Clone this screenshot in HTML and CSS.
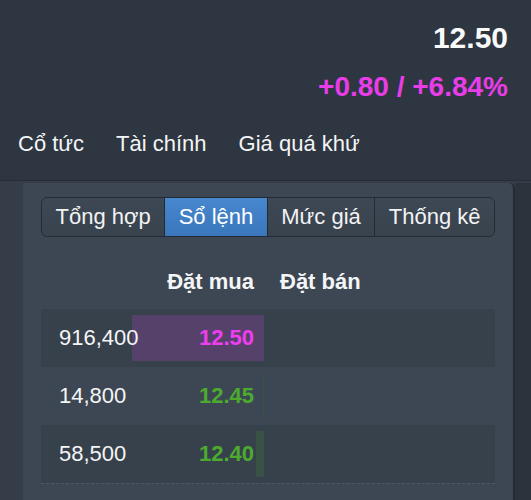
FILE: index.html
```html
<!DOCTYPE html>
<html lang="vi">
<head>
<meta charset="utf-8">
<title>Sổ lệnh</title>
<link rel="stylesheet" href="styles.css">
</head>
<body>
<header class="header">
  <div class="quote">
    <div class="price">12.50</div>
    <div class="change">+0.80 / +6.84%</div>
  </div>
  <nav class="nav">
    <span class="nav-item">Cổ tức</span>
    <span class="nav-item">Tài chính</span>
    <span class="nav-item">Giá quá khứ</span>
  </nav>
</header>
<main class="content">
  <section class="panel">
    <div class="segmented">
      <span class="seg">Tổng hợp</span>
      <span class="seg seg-active">Sổ lệnh</span>
      <span class="seg">Mức giá</span>
      <span class="seg">Thống kê</span>
    </div>
    <div class="book-head">
      <span class="head-buy">Đặt mua</span>
      <span class="head-sell">Đặt bán</span>
    </div>
    <div class="book">
      <div class="row row-odd">
        <div class="buy">
          <span class="bar bar-up" style="width:132px"></span>
          <span class="qty">916,400</span>
          <span class="px px-ref">12.50</span>
        </div>
        <div class="sell"></div>
      </div>
      <div class="row">
        <div class="buy">
          <span class="bar bar-green" style="width:1px"></span>
          <span class="qty">14,800</span>
          <span class="px px-green">12.45</span>
        </div>
        <div class="sell"></div>
      </div>
      <div class="row row-odd">
        <div class="buy">
          <span class="bar bar-green" style="width:8px"></span>
          <span class="qty">58,500</span>
          <span class="px px-green">12.40</span>
        </div>
        <div class="sell"></div>
      </div>
    </div>
  </section>
  <div class="gutter"></div>
</main>
</body>
</html>
```
FILE: styles.css
```css
* { box-sizing: border-box; }
html, body { margin: 0; padding: 0; }
body {
  width: 531px;
  height: 500px;
  overflow: hidden;
  background: #2e3641;
  font-family: "Liberation Sans", Arial, sans-serif;
  color: #f4f5f6;
}
.header {
  height: 181px;
  border-bottom: 1px solid #262d36;
  padding: 20px 23px 0 18px;
}
.quote { text-align: right; }
.price {
  font-size: 30px;
  line-height: 36px;
  font-weight: bold;
  color: #fafafa;
}
.change {
  margin-top: 13px;
  font-size: 28px;
  line-height: 36px;
  font-weight: bold;
  color: #e83de8;
}
.nav {
  margin-top: 24px;
  display: flex;
  gap: 32px;
  font-size: 22px;
  line-height: 30px;
}
.content {
  display: flex;
  height: 319px;
  background: #343d48;
  padding: 2px 0 0 23px;
}
.panel {
  flex: 1 1 0;
  min-width: 0;
  background: #3d4753;
  border-top-right-radius: 6px;
  border-right: 2px solid #242b33;
  padding: 14px 18px 0 18px;
}
.gutter {
  flex: 0 0 16px;
  background: #2b333c;
}
.segmented {
  display: flex;
  height: 40px;
  border: 1px solid #232a32;
  border-radius: 6px;
  overflow: hidden;
  background: linear-gradient(#3e4854, #39434e);
}
.seg {
  flex: 1 1 auto;
  min-width: 0;
  padding: 0 13px;
  font-size: 22px;
  line-height: 38px;
  text-align: center;
  white-space: nowrap;
  color: #f2f3f4;
}
.seg + .seg { border-left: 1px solid #232a32; }
.seg-active {
  background: linear-gradient(#4787cd, #3a77bd);
  color: #ffffff;
}
.book-head {
  display: grid;
  grid-template-columns: 223px 1fr;
  margin-top: 30px;
  font-size: 22px;
  line-height: 30px;
  font-weight: bold;
}
.head-buy { text-align: right; padding-right: 10px; }
.head-sell { padding-left: 16px; }
.book {
  margin-top: 12px;
  border-bottom: 1px dashed #4d5864;
}
.row {
  display: grid;
  grid-template-columns: 223px 1fr;
  height: 58px;
  font-size: 22px;
  line-height: 58px;
}
.row-odd { background: #37414c; }
.buy {
  position: relative;
  display: flex;
  justify-content: space-between;
  padding: 0 10px 0 18px;
}
.bar {
  position: absolute;
  right: 0;
  top: 6px;
  height: 46px;
}
.bar-up { background: #55416a; }
.bar-green { background: #3a5146; }
.qty, .px { position: relative; }
.qty { color: #f4f5f6; }
.px { font-weight: bold; }
.px-ref { color: #ef3df0; }
.px-green { color: #4cab2e; }
```
